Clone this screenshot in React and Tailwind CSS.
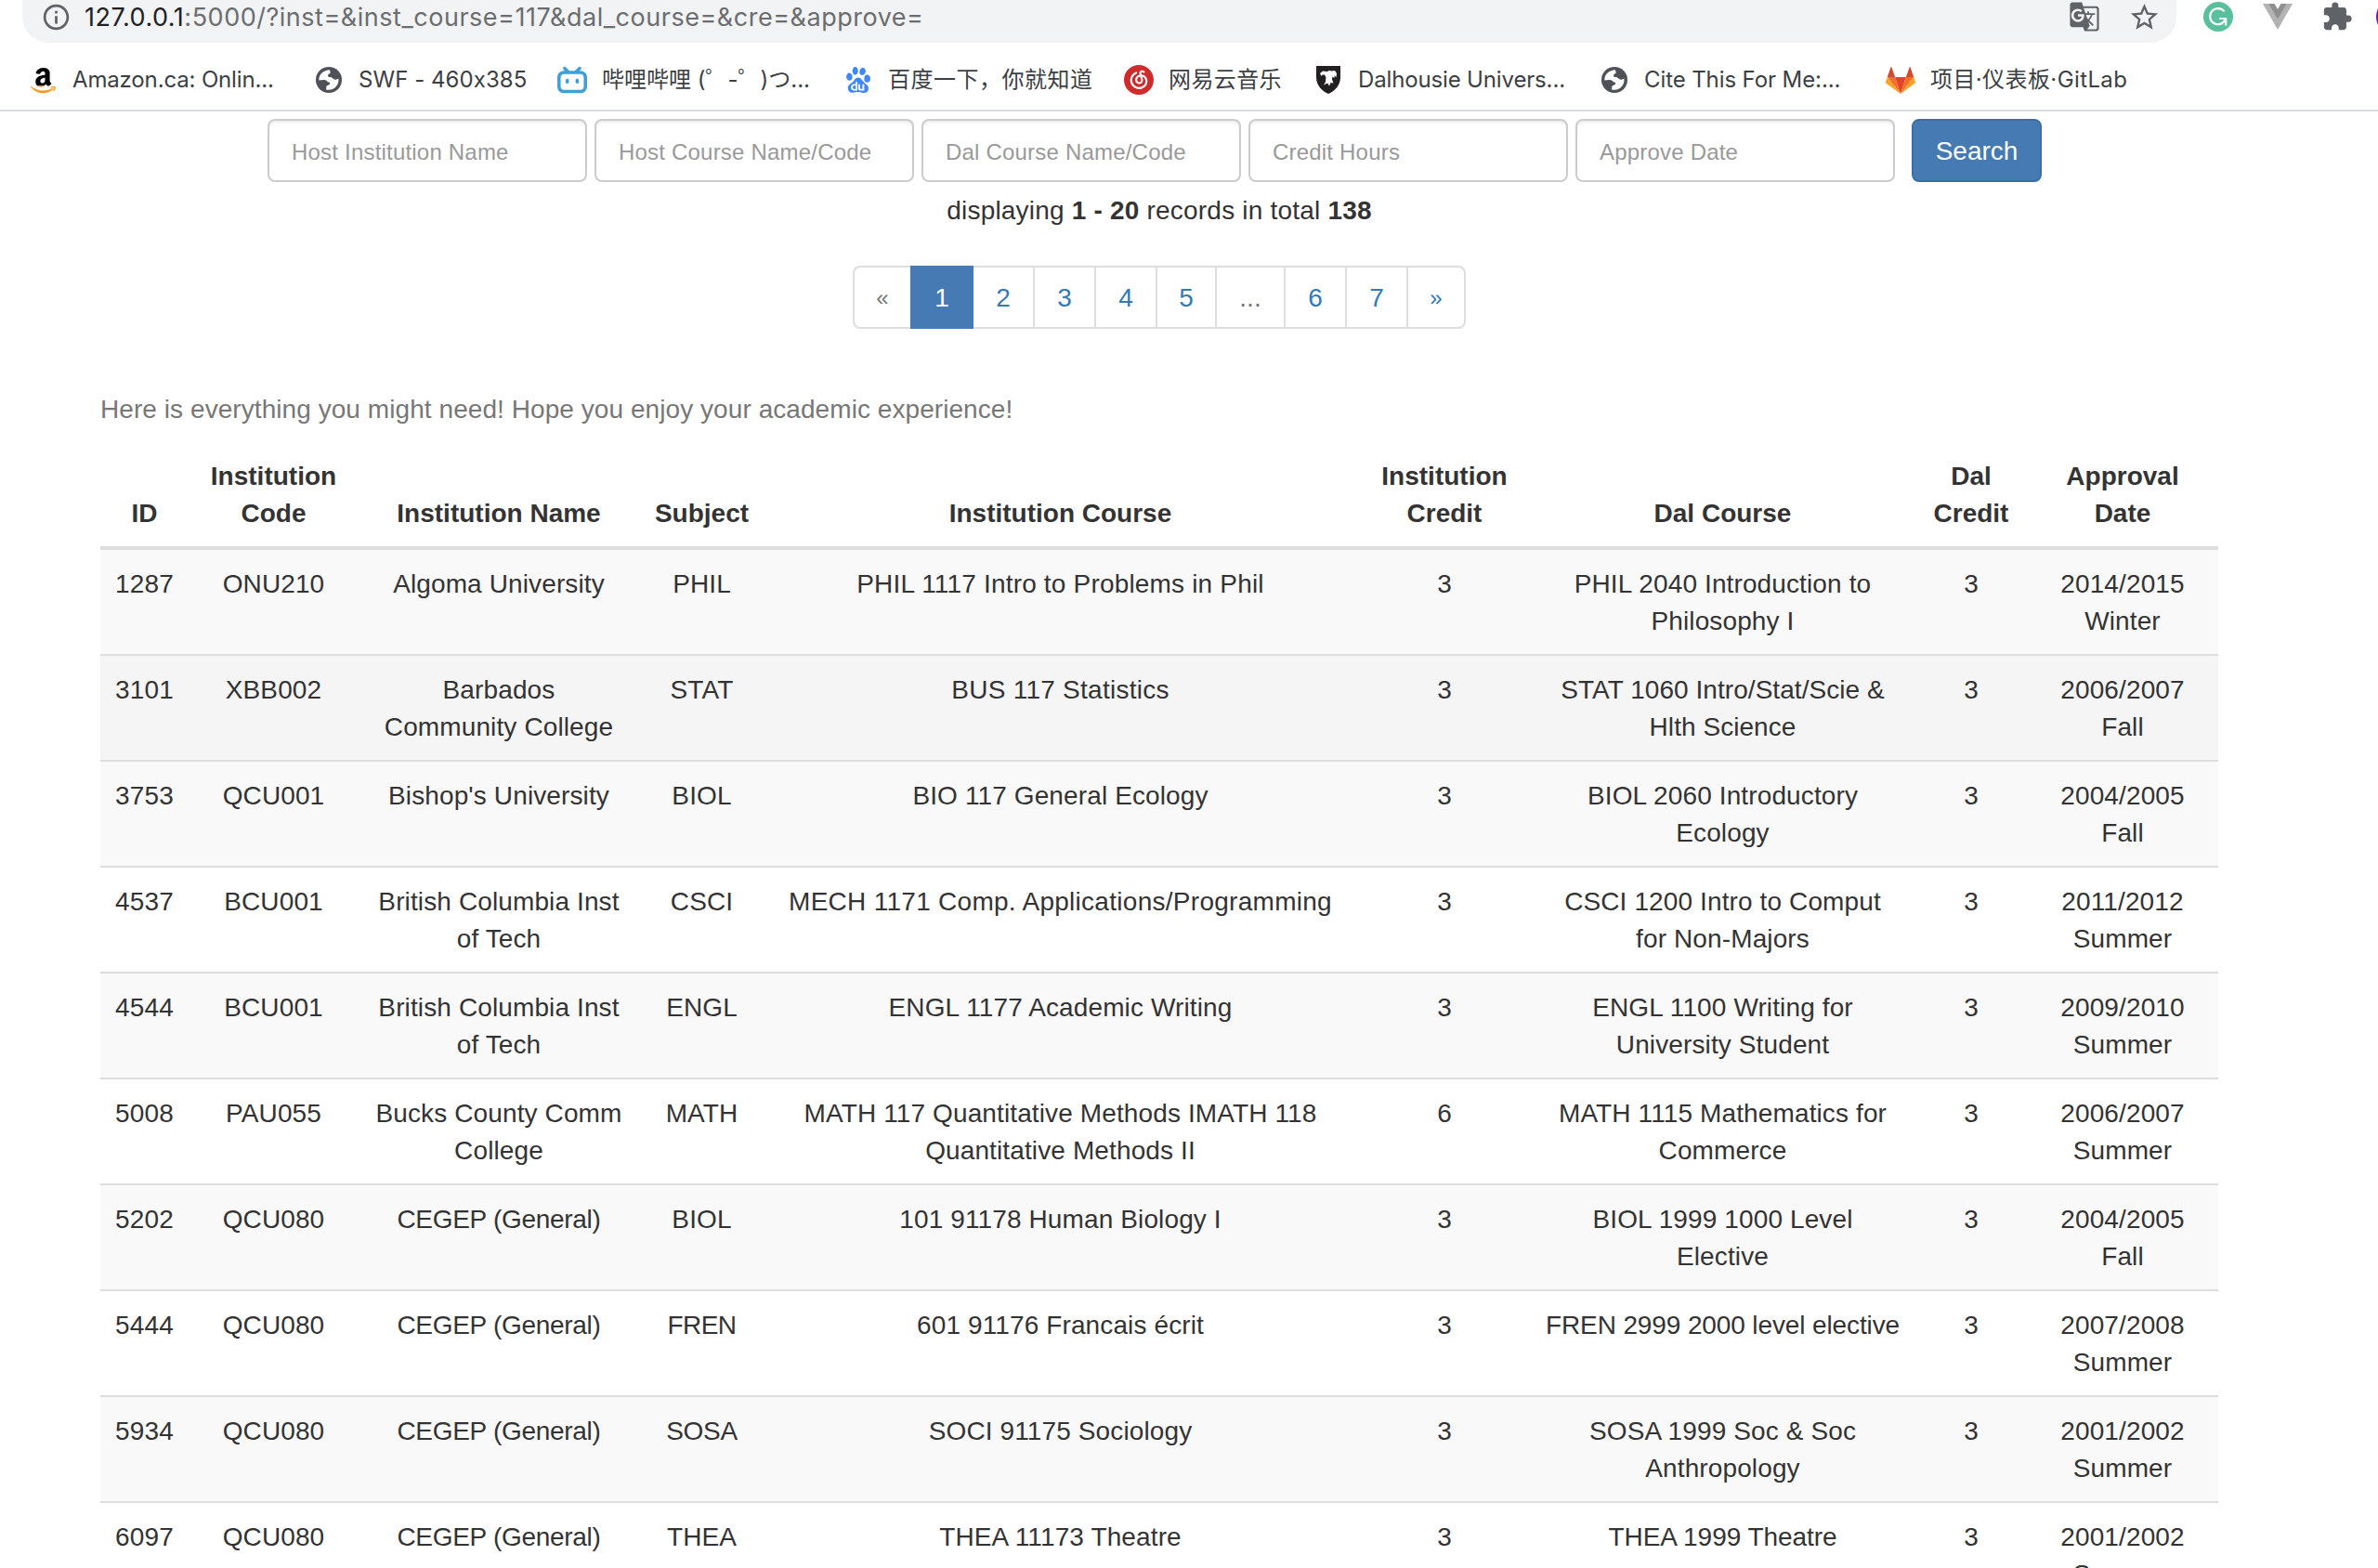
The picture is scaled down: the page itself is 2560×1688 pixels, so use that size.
import React from "react";
import { SiBilibili, SiBaidu, SiNeteasecloudmusic } from "react-icons/si";
import { FaAmazon } from "react-icons/fa";
import { MdExtension, MdStarBorder, MdGTranslate, MdInfoOutline } from "react-icons/md";

function AmazonIcon() {
  return (
    <span className="grid">
      <FaAmazon className="col-start-1 row-start-1 size-[31px] text-black [clip-path:inset(0_0_29%_0)]" />
      <FaAmazon className="col-start-1 row-start-1 size-[31px] text-[#f79a1f] [clip-path:inset(71%_0_0_0)]" stroke="#f79a1f" strokeWidth="8" />
    </span>
  );
}

function GlobeIcon() {
  return (
    <svg viewBox="0 0 28 28" className="size-7">
      <circle cx="14" cy="14" r="14" fill="#4f5159" />
      <path
        fill="#fff"
        d="M14.6 3.2 C9.5 3.4 5 6.6 3.6 11.2 C3.4 12.4 3.3 13.6 3.4 14.6 C5.6 14 8.4 13.6 10.4 14.2 C12 14.8 12.4 16.4 14 16.6 C15.4 16.8 15.6 18 14.6 19 C13.4 20.2 11.6 19.6 11.4 21.2 C11.3 22.4 11.2 23.6 11 24.4 C15 25.6 19.6 24 22.2 20.8 C24.2 18.2 24.8 15.4 24.4 12.6 C23 13.8 20.6 14 19 13 C17.6 12.2 17.4 11 15.6 11 C13.8 11.1 12.8 10.6 13 9 C13.2 7.4 15.4 7.6 15.6 6.2 C15.7 5 15.2 4 14.6 3.2 Z"
      />
    </svg>
  );
}

function ShieldIcon() {
  return (
    <svg viewBox="0 0 26 30" className="h-[30px] w-[26px]">
      <path fill="#231f20" d="M0 0 H26 V12 C26 21 20 27 13 30 C6 27 0 21 0 12 Z" />
      <path
        fill="#fff"
        d="M4 8 L7 5.4 L12 6 L14 4.8 L16.4 5.6 L20 5 L22 8 L21.4 12.4 L19.8 10 L19.4 13 L17.4 11.4 L17 14.6 L18.4 18.6 L15.6 18 L14 21.4 L12 18.6 L8 20.4 L10 17 L10.4 12.2 L9 9.6 L6.6 9.4 L5.6 11 Z"
      />
    </svg>
  );
}

function GitLabIcon() {
  return (
    <svg viewBox="0 0 32 29" className="h-[29px] w-8">
      <path fill="#e24329" d="M16 29 L21.9 11 H10.1 Z" />
      <path fill="#fc6d26" d="M16 29 L10.1 11 H1.8 Z M16 29 L21.9 11 H30.2 Z" />
      <path fill="#fca326" d="M1.8 11 L0 16.4 C-.1 17 0 17.4 .6 17.8 L16 29 Z M30.2 11 L32 16.4 C32.1 17 32 17.4 31.4 17.8 L16 29 Z" />
      <path fill="#d5492f" d="M1.8 11 H10.1 L6.4 0.4 C6.2 0 5.6 0 5.4 0.4 Z M30.2 11 H21.9 L25.6 0.4 C25.8 0 26.4 0 26.6 0.4 Z" />
    </svg>
  );
}

function GrammarlyIcon() {
  return (
    <svg viewBox="0 0 32 32" className="size-8">
      <circle cx="16" cy="16" r="16" fill="#58c09c" />
      <path fill="none" stroke="#fff" strokeWidth="2.2" d="M22.6 10.4 A8.6 8.6 0 1 0 23.6 19.2 M17 18 H24.2 V25.4" />
    </svg>
  );
}

function VueIcon() {
  return (
    <svg viewBox="0 0 32 28" className="h-7 w-8">
      <path fill="#b3b3b3" d="M0 0 H32 L16 28 Z" />
      <path fill="#8f8f8f" d="M6.4 0 H12.4 L16 6.4 L19.6 0 H25.6 L16 16.6 Z" />
      <path fill="#fff" d="M12.6 0 H19.4 L16 5.6 Z" />
    </svg>
  );
}

const bookmarks = [
  { label: "Amazon.ca: Onlin...", icon: <AmazonIcon />, width: "w-[308px]", track: "tracking-[-0.15px]" },
  { label: "SWF - 460x385", icon: <GlobeIcon />, width: "w-[262px]", track: "tracking-[0.05px]" },
  { label: "哔哩哔哩 (゜-゜)つ...", icon: <SiBilibili className="size-8 text-[#419fd4]" />, width: "w-[308px]", track: "tracking-[0px]" },
  { label: "百度一下，你就知道", icon: <SiBaidu className="size-7 text-[#3f87f9]" />, width: "w-[302px]", track: "tracking-[0.5px]" },
  { label: "网易云音乐", icon: <SiNeteasecloudmusic className="size-8 text-[#cf2a2c]" />, width: "w-[204px]", track: "tracking-[0.4px]" },
  { label: "Dalhousie Univers...", icon: <ShieldIcon />, width: "w-[308px]", track: "tracking-[-0.15px]" },
  { label: "Cite This For Me:...", icon: <GlobeIcon />, width: "w-[308px]", track: "tracking-[-0.1px]" },
  { label: "项目·仪表板·GitLab", icon: <GitLabIcon />, width: "w-[300px]", track: "tracking-[0.4px]" },
];

const fields = ["Host Institution Name", "Host Course Name/Code", "Dal Course Name/Code", "Credit Hours", "Approve Date"];

const pages = [
  { label: "2", cell: "w-[66px]", text: "text-[#337ab7]" },
  { label: "3", cell: "w-[66px]", text: "text-[#337ab7]" },
  { label: "4", cell: "w-[66px]", text: "text-[#337ab7]" },
  { label: "5", cell: "w-[64px]", text: "text-[#337ab7]" },
  { label: "...", cell: "w-[74px]", text: "text-[#777]" },
  { label: "6", cell: "w-[66px]", text: "text-[#337ab7]" },
  { label: "7", cell: "w-[66px]", text: "text-[#337ab7]" },
];

const columns = [
  { label: "ID", width: "w-[95px]" },
  { label: "Institution\nCode", width: "w-[183px]" },
  { label: "Institution Name", width: "w-[302px]" },
  { label: "Subject", width: "w-[135px]" },
  { label: "Institution Course", width: "w-[637px]" },
  { label: "Institution\nCredit", width: "w-[190px]" },
  { label: "Dal Course", width: "w-[409px]" },
  { label: "Dal\nCredit", width: "w-[126px]" },
  { label: "Approval\nDate", width: "w-[203px]" },
];

const rows = [
  ["1287", "ONU210", "Algoma University", "PHIL", "PHIL 1117 Intro to Problems in Phil", "3", "PHIL 2040 Introduction to\nPhilosophy I", "3", "2014/2015\nWinter"],
  ["3101", "XBB002", "Barbados\nCommunity College", "STAT", "BUS 117 Statistics", "3", "STAT 1060 Intro/Stat/Scie &\nHlth Science", "3", "2006/2007\nFall"],
  ["3753", "QCU001", "Bishop's University", "BIOL", "BIO 117 General Ecology", "3", "BIOL 2060 Introductory\nEcology", "3", "2004/2005\nFall"],
  ["4537", "BCU001", "British Columbia Inst\nof Tech", "CSCI", "MECH 1171 Comp. Applications/Programming", "3", "CSCI 1200 Intro to Comput\nfor Non-Majors", "3", "2011/2012\nSummer"],
  ["4544", "BCU001", "British Columbia Inst\nof Tech", "ENGL", "ENGL 1177 Academic Writing", "3", "ENGL 1100 Writing for\nUniversity Student", "3", "2009/2010\nSummer"],
  ["5008", "PAU055", "Bucks County Comm\nCollege", "MATH", "MATH 117 Quantitative Methods IMATH 118\nQuantitative Methods II", "6", "MATH 1115 Mathematics for\nCommerce", "3", "2006/2007\nSummer"],
  ["5202", "QCU080", "CEGEP (General)", "BIOL", "101 91178 Human Biology I", "3", "BIOL 1999 1000 Level\nElective", "3", "2004/2005\nFall"],
  ["5444", "QCU080", "CEGEP (General)", "FREN", "601 91176 Francais écrit", "3", "FREN 2999 2000 level elective", "3", "2007/2008\nSummer"],
  ["5934", "QCU080", "CEGEP (General)", "SOSA", "SOCI 91175 Sociology", "3", "SOSA 1999 Soc & Soc\nAnthropology", "3", "2001/2002\nSummer"],
  ["6097", "QCU080", "CEGEP (General)", "THEA", "THEA 11173 Theatre", "3", "THEA 1999 Theatre", "3", "2001/2002\nSummer"],
];

const tracking = {
  "CEGEP (General)": "tracking-[-0.3px]",
  "FREN": "tracking-[-0.6px]",
  "SOSA": "tracking-[-0.3px]",
  "PHIL 1117 Intro to Problems in Phil": "tracking-[0.18px]",
  "BUS 117 Statistics": "tracking-[0.25px]",
  "MECH 1171 Comp. Applications/Programming": "tracking-[0.28px]",
  "FREN 2999 2000 level elective": "tracking-[-0.12px]",
  "STAT 1060 Intro/Stat/Scie &\nHlth Science": "tracking-[0.05px]",
  "THEA 1999 Theatre": "tracking-[-0.05px]",
};

function rowColor(index) {
  if (index === 1) return "bg-[#f5f5f5]";
  return index % 2 === 0 ? "bg-[#f9f9f9]" : "bg-white";
}

function BrowserBar() {
  return (
    <header className="h-[120px] shrink-0 border-b-2 border-[#dadce0] bg-white font-[Inter,'Noto_Sans_CJK_SC',sans-serif] [font-feature-settings:'calt'_0]">
      <div className="flex h-[46px] items-end">
        <div className="ml-6 flex h-[46px] w-[2319px] items-start rounded-b-[28px] bg-[#f1f3f4] pl-[20px]">
          <MdInfoOutline className="mt-[2px] size-[33px] shrink-0 text-[#5f6368]" />
          <div className="ml-[14px] mt-[-1px] whitespace-nowrap text-[27px] leading-[40px] tracking-[0.52px] text-[#6b6d70]">
            <span className="text-[#202124]">127.0.0.1</span>:5000/?inst=&amp;inst_course=117&amp;dal_course=&amp;cre=&amp;approve=
          </div>
          <MdGTranslate className="mr-[30px] mt-[1px] ml-auto size-[34px] shrink-0 text-[#5f6368]" />
          <MdStarBorder className="mt-[1px] mr-[17px] size-[35px] shrink-0 text-[#5f6368]" />
        </div>
        <div className="ml-[29px] flex h-full w-[188px] items-start gap-8 overflow-hidden">
          <div className="mt-[2px] shrink-0"><GrammarlyIcon /></div>
          <div className="mt-1 shrink-0"><VueIcon /></div>
          <MdExtension className="mt-[1px] -ml-[1px] size-[34px] shrink-0 text-[#5f6368]" />
          <div className="-ml-[7px] mt-[-2px] size-10 shrink-0 rounded-full bg-[#6a1b9a]" />
        </div>
      </div>
      <nav className="flex h-[72px] items-center pl-[30px] pt-[8px]">
        {bookmarks.map((b) => (
          <div key={b.label} className={`flex shrink-0 items-center ${b.width}`}>
            <span className="flex w-8 shrink-0 justify-center">{b.icon}</span>
            <span className={`ml-4 whitespace-nowrap text-[24px] leading-8 text-[#3c4043] ${b.track}`}>{b.label}</span>
          </div>
        ))}
      </nav>
    </header>
  );
}

export default function App() {
  return (
    <div className="flex h-[1688px] w-[2560px] flex-col overflow-hidden bg-white">
      <BrowserBar />
      <main className="font-['Liberation_Sans',Arial,sans-serif] text-[28px] leading-[40px] text-[#333]">
        <form className="ml-[288px] flex gap-2 pt-2">
          {fields.map((f) => (
            <input
              key={f}
              placeholder={f}
              className="h-[68px] w-[344px] rounded-lg border-2 border-[#ccc] bg-white px-6 pt-1 text-[24px] tracking-[0.2px] shadow-[inset_0_2px_2px_rgba(0,0,0,0.075)] placeholder:text-[#999]"
            />
          ))}
          <button type="button" className="ml-[10px] h-[68px] w-[140px] rounded-lg border-2 border-[#3a6ea5] bg-[#457ab3] pt-px text-[28px] text-white">
            Search
          </button>
        </form>
        <p className="ml-[108px] mt-[11px] w-[2280px] text-center tracking-[0.2px]">
          displaying <b>1 - 20</b> records in total <b>138</b>
        </p>
        <div className="ml-[918px] mt-[39px] flex h-[68px] w-[660px] text-center leading-[66px]">
          <div className="w-[62px] rounded-l-lg border-y-2 border-l-2 border-[#ddd] text-[24px] text-[#777]">«</div>
          <div className="w-[68px] border-2 border-[#457ab3] bg-[#457ab3] text-white">1</div>
          {pages.map((p) => (
            <div key={p.label} className={`border-y-2 border-r-2 border-[#ddd] ${p.cell} ${p.text}`}>{p.label}</div>
          ))}
          <div className="w-[62px] rounded-r-lg border-y-2 border-r-2 border-[#ddd] text-[24px] text-[#337ab7]">»</div>
        </div>
        <p className="ml-[108px] mt-[67px] tracking-[0.065px] text-[#777]">Here is everything you might need! Hope you enjoy your academic experience!</p>
        <table className="ml-[108px] mt-[15px] w-[2280px] table-fixed border-separate border-spacing-0 whitespace-pre text-center">
          <thead>
            <tr>
              {columns.map((c, j) => (
                <th key={c.label} className={`border-b-4 border-[#ddd] pt-[17px] pb-[15px] pl-0 align-bottom font-bold ${j === 8 ? "pr-[3px]" : "pr-0"} ${c.width}`}>{c.label}</th>
              ))}
            </tr>
          </thead>
          <tbody>
            {rows.map((r, i) => (
              <tr key={r[0]} className={rowColor(i)}>
                {r.map((cell, j) => (
                  <td
                    key={j}
                    className={`h-[114px] border-b-2 border-[#ddd] pt-[17px] pb-[15px] pl-0 align-top ${j === 8 ? "pr-[3px]" : "pr-0"} ${tracking[cell] || "tracking-[0.12px]"}`}
                  >
                    {cell}
                  </td>
                ))}
              </tr>
            ))}
          </tbody>
        </table>
      </main>
    </div>
  );
}
